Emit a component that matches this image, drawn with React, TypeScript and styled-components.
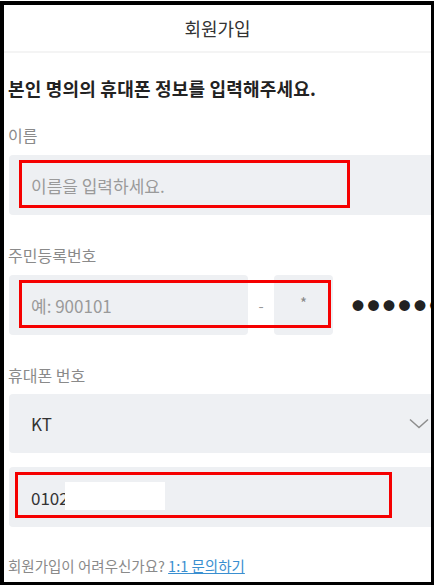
import styled, { createGlobalStyle } from "styled-components";

const GlobalStyle = createGlobalStyle`
  html, body {
    margin: 0;
    padding: 0;
    background: #ffffff;
  }
  body {
    font-family: "Noto Sans CJK KR", "Noto Sans", sans-serif;
  }
`;

const Frame = styled.div`
  margin-top: 1px;
  width: 427px;
  height: 577px;
  border-style: solid;
  border-color: #000000;
  border-width: 4px 3px 3px 4px;
  overflow: hidden;
  background: #ffffff;
`;

const Page = styled.div`
  width: 460px;
`;

const Header = styled.div`
  width: 427px;
  height: 46px;
  display: flex;
  align-items: center;
  justify-content: center;
  font-size: 18px;
  color: #333333;
  border-bottom: 2px solid #f4f4f4;
`;

const Form = styled.div`
  padding: 0 0 0 5px;
  display: flex;
  flex-direction: column;
`;

const Heading = styled.h2`
  margin: 23px 0 0 -1px;
  font-size: 18px;
  line-height: 24px;
  font-weight: 700;
  letter-spacing: 0.2px;
  color: #222222;
`;

const Label = styled.div<{ $top: number }>`
  margin: ${(p) => p.$top}px 0 0 -1px;
  font-size: 16px;
  line-height: 20px;
  color: #8a8a8a;
`;

const Field = styled.div<{ $top: number; $width?: number; $height?: number }>`
  position: relative;
  margin-top: ${(p) => p.$top}px;
  width: ${(p) => p.$width ?? 440}px;
  height: ${(p) => p.$height ?? 60}px;
  box-sizing: border-box;
  padding-left: 22px;
  display: flex;
  align-items: center;
  background: #eef0f3;
  border-radius: 4px;
  font-size: 17px;
`;

const Placeholder = styled.span`
  color: #9a9a9a;
`;

const Value = styled.span`
  color: #333333;
`;

const Highlight = styled.div<{ $left: number; $top: number; $w: number; $h: number }>`
  position: absolute;
  left: ${(p) => p.$left}px;
  top: ${(p) => p.$top}px;
  width: ${(p) => p.$w}px;
  height: ${(p) => p.$h}px;
  box-sizing: border-box;
  border: 3px solid #f50000;
  pointer-events: none;
`;

const Redact = styled.div`
  position: absolute;
  left: 56px;
  top: 15px;
  width: 100px;
  height: 28px;
  background: #ffffff;
`;

const IdRow = styled.div`
  position: relative;
  margin-top: 10px;
  height: 60px;
  display: flex;
  align-items: center;
`;

const Dash = styled.span`
  width: 26px;
  text-align: center;
  color: #999999;
  font-size: 15px;
`;

const Small = styled.div`
  width: 59px;
  height: 60px;
  background: #eef0f3;
  border-radius: 4px;
  display: flex;
  justify-content: center;
  padding-top: 17px;
  box-sizing: border-box;
  color: #888888;
  font-size: 15px;
`;

const Dots = styled.span`
  margin-left: 19px;
  font-size: 12px;
  letter-spacing: 3.5px;
  color: #222222;
  white-space: nowrap;
`;

const Chevron = styled.svg`
  position: absolute;
  left: 400px;
  top: 24px;
`;

const Footer = styled.div`
  margin: 29px 0 0 -1px;
  font-size: 14.5px;
  line-height: 20px;
  color: #8a8a8a;
  a {
    color: #3a8fd0;
    text-decoration: underline;
  }
`;

export default function App() {
  return (
    <>
      <GlobalStyle />
      <Frame>
        <Page>
          <Header>회원가입</Header>
          <Form>
            <Heading>본인 명의의 휴대폰 정보를 입력해주세요.</Heading>
            <Label $top={25}>이름</Label>
            <Field $top={10}>
              <Placeholder>이름을 입력하세요.</Placeholder>
              <Highlight $left={10} $top={5} $w={331} $h={48} />
            </Field>
            <Label $top={30}>주민등록번호</Label>
            <IdRow>
              <Field $top={0} $width={239}>
                <Placeholder>예: 900101</Placeholder>
              </Field>
              <Dash>-</Dash>
              <Small>*</Small>
              <Dots>●●●●●●</Dots>
              <Highlight $left={10} $top={5} $w={312} $h={48} />
            </IdRow>
            <Label $top={30}>휴대폰 번호</Label>
            <Field $top={9} $height={59}>
              <Value>KT</Value>
              <Chevron width="20" height="12" viewBox="0 0 20 12">
                <path d="M1 1.5 L10 9.5 L19 1.5" fill="none" stroke="#8d8d8d" strokeWidth="1.5" />
              </Chevron>
            </Field>
            <Field $top={14}>
              <Value>0102</Value>
              <Redact />
              <Highlight $left={6} $top={5} $w={377} $h={46} />
            </Field>
            <Footer>
              회원가입이 어려우신가요? <a href="#">1:1 문의하기</a>
            </Footer>
          </Form>
        </Page>
      </Frame>
    </>
  );
}
